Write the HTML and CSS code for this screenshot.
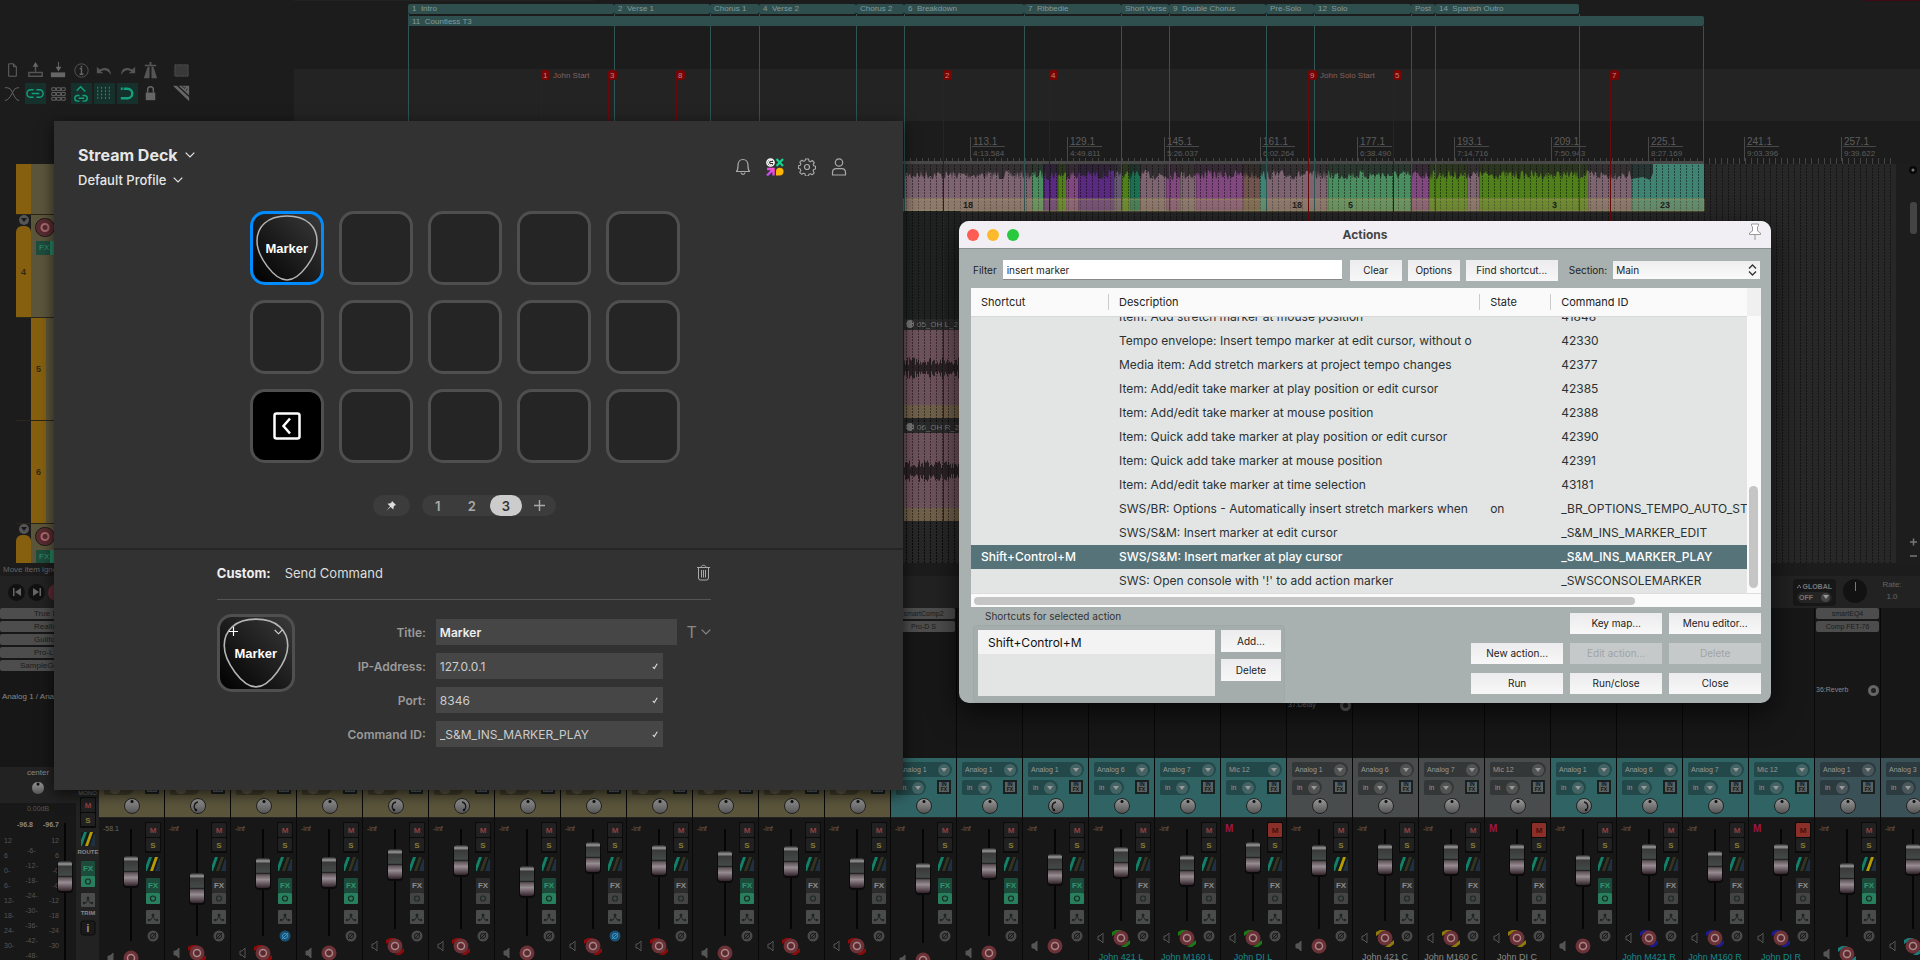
FILE: index.html
```html
<!DOCTYPE html>
<html lang="en">
<head>
<meta charset="utf-8">
<title>Stream Deck and Actions</title>
<link rel="stylesheet" href="styles.css">
</head>
<body>
<svg class="defs" width="0" height="0" aria-hidden="true">
  <defs>
    <linearGradient id="logoPink" x1="0" y1="1" x2="1" y2="0"><stop offset="0" stop-color="#b04bff"/><stop offset="1" stop-color="#ff4fd0"/></linearGradient>
    <symbol id="pick" viewBox="0 0 68 68"><path d="M34 2C54 2 64 13 64 27C64 42 47 66 34 66C21 66 4 42 4 27C4 13 14 2 34 2Z" fill="none" stroke="#b5b5b5" stroke-width="1.5"/></symbol>
    <symbol id="chev" viewBox="0 0 10 6"><path d="M.7 .7L5 5L9.3 .7" fill="none" stroke="currentColor" stroke-width="1.2"/></symbol>
    <symbol id="tick" viewBox="0 0 8 8"><path d="M1.8 4.800L3.300 6.500L6.200 1.800" fill="none" stroke="#ddd" stroke-width="1.1"/></symbol>
  </defs>
</svg>
<div class="desktop">
  <div class="daw">
    <section class="arrange">
      <div class="side">
        <div class="toolbar" id="toolbar"></div>
        <div class="tracks">
          <div class="track t-top"><i class="bar"></i><b></b></div>
          <div class="track t-four"><div class="barwrap"><u></u><i class="bar">4</i></div><b><span class="rec"></span><span class="fx">FX</span></b></div>
          <div class="track child"><i class="bar">5</i><b></b></div>
          <div class="track child"><i class="bar">6</i><b></b></div>
          <div class="track t-last"><div class="barwrap"><u></u><i class="bar"></i></div><b><span class="rec"></span><span class="fx">FX</span></b></div>
        </div>
      </div>
      <svg class="timeline" id="timeline" viewBox="294 0 1626 563" preserveAspectRatio="xMinYMin meet"></svg>
    </section>
    <section class="transport">
      <div class="status">Move item igno</div>
      <div class="transport-left">
        <button class="round" aria-label="Start"><svg width="10" height="8" viewBox="0 0 10 8"><path d="M1 0h1.500v8H1zM9 0v8L3 4z" fill="#666"/></svg></button>
        <button class="round" aria-label="End"><svg width="10" height="8" viewBox="0 0 10 8"><path d="M7.500 0H9v8H7.500zM1 0v8L7 4z" fill="#666"/></svg></button>
        <button class="round red" aria-label="Record"></button>
      </div>
      <div class="transport-right">
        <div class="global">
          <div><svg width="9" height="7" viewBox="0 0 9 7"><path d="M1 6L4.500 1.500L8 6" fill="none" stroke="#888"/><circle cx="1.500" cy="5.500" r="1.300" fill="#888"/><circle cx="4.500" cy="1.500" r="1.300" fill="#888"/><circle cx="7.500" cy="5.500" r="1.300" fill="#888"/></svg>GLOBAL</div>
          <button>OFF<u></u></button>
        </div>
        <div class="ratedial"></div>
        <div class="rate">Rate:<br>1.0</div>
      </div>
    </section>
    <section class="mixer">
      <div class="master">
        <div class="slots"><span>True Ir</span><span>RealInst</span><span>Gullfos</span><span>Pro-L</span><span>SampleGra</span></div>
        <div class="hw">Analog 1 / Analog</div>
        <div class="master-low">
          <div class="m-left">
            <span>center</span><i class="knob"></i><small>0.00dB</small>
            <div class="peaks"><b>-96.8</b><b>-96.7</b></div>
            <div class="scale">
              <div><span>12</span><span>6</span><span>0-</span><span>6-</span><span>12-</span><span>18-</span><span>24-</span><span>30-</span></div>
              <div><span>-6-</span><span>-12-</span><span>-18-</span><span>-24-</span><span>-30-</span><span>-36-</span><span>-42-</span><span>-48-</span></div>
              <div><span>12</span><span>6</span><span>-0</span><span>-6</span><span>-12</span><span>-18</span><span>-24</span><span>-30</span></div>
            </div>
            <svg class="m-fader" width="16" height="138" viewBox="0 0 16 138"><path d="M8 0v138" stroke="#050505" stroke-width="2"/><use href="#cap" y="38"/></svg>
          </div>
          <div class="m-right"><span>MONO</span><div id="masterButtons"></div></div>
        </div>
      </div>
      <div class="strips" id="strips"></div>
    </section>
  </div>

  <main class="deck">
    <header class="deck-head">
      <div class="names">
        <button class="deck-name">Stream Deck <svg width="10" height="6"><use href="#chev"/></svg></button>
        <button class="deck-profile">Default Profile <svg width="10" height="6"><use href="#chev"/></svg></button>
      </div>
      <nav class="deck-icons">
        <button aria-label="Notifications"><svg width="18" height="18" viewBox="0 0 18 18"><path d="M2.500 13.500C4 12 4 10.500 4 7.500C4 4 6 1.500 9 1.500S14 4 14 7.500C14 10.500 14 12 15.500 13.500ZM7 14.500C7.300 17 10.700 17 11 14.500" fill="none" stroke="#aaa" stroke-width="1.2" stroke-linejoin="round"/></svg></button>
        <button aria-label="Marketplace"><svg width="18" height="18" viewBox="0 0 18 18"><circle cx="4.500" cy="4.500" r="3.600" fill="none" stroke="#fff" stroke-width="1.5"/><path d="M8 4.500H4.500M6 2.500A2.300 2.300 0 1 0 6 6.500" fill="none" stroke="#fff" stroke-width="1.1"/><path d="M10.500 1l6.500 7M17 1l-6.500 7" stroke="#10d58b" stroke-width="2.2"/><path d="M1 11h6.500v6.500M7.500 11L1 17.500" fill="none" stroke="url(#logoPink)" stroke-width="2.4"/><path d="M10 17.500V13.500A3.700 3.700 0 0 1 17.500 13.500A4 4 0 0 1 13.500 17.500Z" fill="#ffb600"/></svg></button>
        <button aria-label="Settings"><svg width="18" height="18" viewBox="0 0 18 18"><path d="M7.500 1h3l.5 2 1.500.7L14.300 2.500l2 2.100-1.100 1.800.6 1.400 1.700.5v2.700l-1.800.5-.6 1.500 1.100 1.800-2 2-1.800-1.100-1.500.6-.5 1.700h-3L7 15.800l-1.500-.6-1.800 1.100-2-2L2.900 12.500 2.200 11 .5 10.500V7.800l1.800-.5.6-1.400L1.800 4.200l2-2 1.700 1.100L7 2.800Z" fill="none" stroke="#aaa" stroke-width="1.1" stroke-linejoin="round"/><circle cx="9" cy="9" r="2.500" fill="none" stroke="#aaa" stroke-width="1.2"/></svg></button>
        <button aria-label="Account"><svg width="18" height="18" viewBox="0 0 18 18"><circle cx="9" cy="4.500" r="3.700" fill="none" stroke="#aaa" stroke-width="1.2"/><path d="M2.500 17V14.500C2.500 12 4 10.700 6.500 10.700H11.500C14 10.700 15.500 12 15.500 14.500V17Z" fill="none" stroke="#aaa" stroke-width="1.2" stroke-linejoin="round"/></svg></button>
      </nav>
    </header>
    <div class="keys" id="keys"></div>
    <div class="pager">
      <button class="pin" aria-label="Pin"><svg width="12" height="12" viewBox="0 0 12 12"><path d="M7 1L11 5L9.700 5.400L8.700 6.500L8.300 9.500L5.700 6.900L1.500 10.500L5.100 6.300L2.500 3.700L5.500 3.300L6.600 2.300Z" fill="#ddd"/></svg></button>
      <div class="pages"><button>1</button><button>2</button><button class="on">3</button><button aria-label="Add page"><svg width="11" height="11" viewBox="0 0 11 11"><path d="M5.500 0v11M0 5.500h11" stroke="#aaa" stroke-width="1.4"/></svg></button></div>
    </div>
    <section class="inspector">
      <div class="insp-head"><strong>Custom:</strong><span>Send Command</span>
        <button aria-label="Delete action"><svg width="15" height="17" viewBox="0 0 15 17"><path d="M1 3.500h13M5 3.500C5 .5 10 .5 10 3.500M2.500 3.500V14Q2.500 16 4.500 16H10.500Q12.500 16 12.500 14V3.500M5.500 6v7.500M7.500 6v7.500M9.500 6v7.500" fill="none" stroke="#aaa"/></svg></button></div>
      <div class="insp-body">
        <div class="preview"><svg class="pick" viewBox="0 0 68 68"><use href="#pick"/></svg><span>Marker</span>
          <svg class="pv-plus" width="9" height="9" viewBox="0 0 9 9"><path d="M4.500 0v9M0 4.500h9" stroke="#fff" stroke-width="1.2"/></svg>
          <svg class="pv-chev" width="9" height="6"><use href="#chev"/></svg></div>
        <form class="fields">
          <label for="f1">Title:</label><div class="line"><div class="box wide"><input id="f1" value="Marker"></div><button type="button" class="tbtn" aria-label="Text style">T<svg width="10" height="6"><use href="#chev"/></svg></button></div>
          <label for="f2">IP-Address:</label><div class="box"><input id="f2" value="127.0.0.1"><svg width="8" height="8"><use href="#tick"/></svg></div>
          <label for="f3">Port:</label><div class="box"><input id="f3" value="8346"><svg width="8" height="8"><use href="#tick"/></svg></div>
          <label for="f4">Command ID:</label><div class="box"><input id="f4" value="_S&amp;M_INS_MARKER_PLAY"><svg width="8" height="8"><use href="#tick"/></svg></div>
        </form>
      </div>
    </section>
  </main>

  <section class="actions">
    <header class="titlebar"><div class="lights"><i></i><i></i><i></i></div><h1>Actions</h1>
      <svg width="16" height="18" viewBox="0 0 16 18"><path d="M4.500 1h7v1.500L10.500 4v4L13.500 10v1.500H2.500V10L5.500 8V4L4.500 2.500ZM8 11.500V17" fill="#fff" stroke="#999"/></svg></header>
    <div class="content">
      <div class="filter">
        <label for="flt">Filter</label><input id="flt" value="insert marker">
        <button class="b52">Clear</button><button class="b52">Options</button><button class="b92">Find shortcut...</button>
        <label for="sec">Section:</label>
        <div class="select"><select id="sec"><option>Main</option></select><svg width="9" height="12" viewBox="0 0 9 12"><path d="M1 4.500L4.500 1L8 4.500M1 7.500L4.500 11L8 7.500" fill="none" stroke="#333" stroke-width="1.3"/></svg></div>
      </div>
      <div class="list">
        <table>
          <colgroup><col class="c1"><col><col class="c3"><col class="c4"></colgroup>
          <thead><tr><th>Shortcut</th><th>Description</th><th>State</th><th>Command ID</th></tr></thead>
          <tbody>
            <tr class="cut"><td></td><td><div><span>Item: Add stretch marker at mouse position</span></div></td><td></td><td><div><span>41848</span></div></td></tr>
            <tr><td></td><td>Tempo envelope: Insert tempo marker at edit cursor, without o</td><td></td><td>42330</td></tr>
            <tr><td></td><td>Media item: Add stretch markers at project tempo changes</td><td></td><td>42377</td></tr>
            <tr><td></td><td>Item: Add/edit take marker at play position or edit cursor</td><td></td><td>42385</td></tr>
            <tr><td></td><td>Item: Add/edit take marker at mouse position</td><td></td><td>42388</td></tr>
            <tr><td></td><td>Item: Quick add take marker at play position or edit cursor</td><td></td><td>42390</td></tr>
            <tr><td></td><td>Item: Quick add take marker at mouse position</td><td></td><td>42391</td></tr>
            <tr><td></td><td>Item: Add/edit take marker at time selection</td><td></td><td>43181</td></tr>
            <tr><td></td><td>SWS/BR: Options - Automatically insert stretch markers when</td><td>on</td><td>_BR_OPTIONS_TEMPO_AUTO_ST</td></tr>
            <tr><td></td><td>SWS/S&amp;M: Insert marker at edit cursor</td><td></td><td>_S&amp;M_INS_MARKER_EDIT</td></tr>
            <tr class="sel"><td>Shift+Control+M</td><td>SWS/S&amp;M: Insert marker at play cursor</td><td></td><td>_S&amp;M_INS_MARKER_PLAY</td></tr>
            <tr><td></td><td>SWS: Open console with '!' to add action marker</td><td></td><td>_SWSCONSOLEMARKER</td></tr>
          </tbody>
        </table>
        <div class="vbar"><i></i></div>
        <div class="hbar"><i></i></div>
      </div>
      <div class="bottom">
        <div class="short"><h2>Shortcuts for selected action</h2>
          <div class="group"><div class="keylist"><div>Shift+Control+M</div></div><div class="keybtns"><button>Add...</button><button>Delete</button></div></div>
        </div>
        <div class="grid">
          <span></span><button>Key map...</button><button>Menu editor...</button>
          <button>New action...</button><button disabled>Edit action...</button><button disabled>Delete</button>
          <button>Run</button><button>Run/close</button><button>Close</button>
        </div>
      </div>
    </div>
  </section>
</div>
<script src="app.js"></script>
</body>
</html>
```
FILE: styles.css
```css
*{box-sizing:border-box}
body{margin:0;background:#1c1c1c;font-family:Inter,"Liberation Sans",sans-serif;color:#ddd}
button,input,select{font:inherit;color:inherit;border:0;background:none;padding:0;margin:0;border-radius:0;outline:0}
i,em{font-style:normal}
u{text-decoration:none}
.defs{position:absolute}
.desktop{position:relative;height:100vh;min-height:720px;overflow:hidden}
.daw{display:flex;flex-direction:column;height:100%;font-family:"Liberation Sans",sans-serif}
.arrange{display:grid;grid-template-columns:294px 1fr;flex:0 0 563px;overflow:hidden}
.timeline{width:100%;height:563px;display:block}
.side{background:#1c1c1c}
.toolbar{display:grid;grid-template-columns:repeat(7,22px) 40px;column-gap:1px;grid-auto-rows:23px;padding:60px 0 0 2px;height:164px;align-content:start}
.toolbar svg{width:21px;height:21px;display:block}
.toolbar svg:nth-child(8n){margin-left:8px}
.toolbar .lit{background:#16302b}
.tracks{padding-left:16px;width:120px}
.track{display:flex;height:103px;border-bottom:1px solid #2a261a}
.track .bar{width:15px;background:#86600f;font-size:9px;font-weight:700;color:#332a10;display:flex;align-items:center;justify-content:center}
.track>b{flex:1;background:#5b553b;padding:4px 5px;display:flex;flex-direction:column;gap:5px}
.t-top{height:51px}
.barwrap{display:flex;flex-direction:column;align-items:center}
.barwrap .bar{flex:1;border-radius:6px 6px 0 0}
.barwrap u{width:10px;height:10px;margin-bottom:1px;border-radius:50%;background:#555;display:flex;align-items:center;justify-content:center}
.barwrap u::after{border-top-color:#1a1a1a}
.child{padding-left:15px}
.t-last{height:40px;border:0}
.rec{width:18px;height:17px;flex:none;border-radius:9px;border:3px solid #592b31;background:radial-gradient(circle,#592b31 2px,#a66a6e 3px,#a66a6e 4px,#592b31 5px);outline:1px solid #1b1516}
.fx{width:30px;height:14px;flex:none;background:linear-gradient(90deg,#1d4d3d 14px,#2a8563 14px);color:#329471;font-size:8px;line-height:14px;padding-left:3px;font-weight:400}
.transport{flex:0 0 45px;display:grid;grid-template-columns:1fr auto;background:#222}
.status{grid-column:1/3;height:13px;font-size:8px;line-height:13px;padding-left:3px;color:#666;background:#1c1c1c}
.transport-left{display:flex;gap:3px;padding:5px 0 0 8px}
.round{width:17px;height:17px;border-radius:50%;background:#111;display:flex;align-items:center;justify-content:center}
.round.red{background:#5d2b33}
.transport-right{display:flex;gap:7px;align-items:flex-start;font-size:8px;color:#666;line-height:12px;padding-right:10px}
.global{width:43px;height:27px;background:#171717;border-radius:4px;padding:2px 4px;font-size:7px;font-weight:700;line-height:11px;color:#777}
.global div{display:flex;align-items:center;gap:1px}
.global button{display:flex;justify-content:space-between;align-items:center;width:100%;height:11px;background:#242424;border-radius:6px;padding:0 2px}
.ratedial{width:24px;height:24px;border-radius:50%;background:linear-gradient(#777,#777) 12px 3px/1px 9px no-repeat #121212}
.rate{width:36px;text-align:center}
.mixer{flex:1;display:flex;min-height:0;overflow:hidden;background:#171717}
.master{flex:0 0 99px;background:#171717}
.slots{display:grid;gap:2px;height:84px;align-content:start}
.slots span{height:11px;background:#4d4d4d;border-radius:2px;font-size:8px;line-height:11px;color:#1c1c1c;text-align:center;white-space:nowrap}
.strip .slots span{font-size:7px}
.master .slots span{text-align:left;padding-left:34px}
.master .slots span:last-child{padding-left:20px}
.hw{height:75px;font-size:8px;color:#888;white-space:nowrap;padding-left:2px}
.master-low{display:grid;grid-template-columns:76px 1fr;background:#222;height:220px;position:relative}
.m-left{display:flex;flex-direction:column;align-items:center;font-size:8px;color:#888;line-height:12px}
.m-left small{width:100%;background:#181818;text-align:center;font-size:7px;color:#555;margin-top:8px}
.knob{width:14px;height:14px;margin:0 auto;border-radius:50%;border:1px solid #222;background:radial-gradient(circle at 50% 18%,#111 1px,transparent 2px),linear-gradient(#999,#555);flex:none}
.knob svg{display:block}
.m-left .knob{margin-top:2px}
.peaks{display:flex;gap:10px;background:#181818;width:100%;justify-content:center;font-size:7px;padding:4px 0 2px}
.scale{display:grid;grid-template-columns:1fr 1fr 1fr;width:100%;background:#181818;font-size:7px;color:#555;padding:0 17px 0 4px;line-height:15px}
.scale div{display:flex;flex-direction:column}
.scale div:nth-child(2){padding-top:10px;text-align:center}
.scale div:nth-child(3){text-align:right}
.m-fader{position:absolute;left:57px;top:56px}
.m-right{display:flex;flex-direction:column;align-items:center;padding-top:22px;font-size:6px;line-height:8px;color:#777}
.strips{display:flex;flex:1;min-width:0;overflow:hidden}
.strip{flex:0 0 66px;border-right:1px solid #080808;display:flex;flex-direction:column}
.strip .slots{height:150px;padding:0 1px}
.strip .slots em{font-size:7px;color:#888;margin-top:52px;display:flex;justify-content:space-between}
.strip .slots .lower{margin-top:93px}
.slots em i{width:11px;height:11px;border-radius:50%;border:3px solid #666;background:#222;margin-top:-1px}
.top{height:60px;padding:4px 4px 0 5px;display:grid;grid-template-columns:1fr 15px;grid-template-rows:15px 15px 18px;row-gap:3px;font-size:7px;color:#999;border-bottom:1px solid #222}
.tan .top{background:#5b553b}
.teal .top{background:#306364}
.gray .top{background:#484c4c}
.blue .top{background:#3b5158}
.in1{grid-column:1/3;background:#0004;border-radius:2px 8px 8px 2px;display:flex;justify-content:space-between;align-items:center;padding:0 2px 0 3px;white-space:nowrap}
.in2{width:30px;background:#0004;border-radius:2px 8px 8px 2px;display:flex;justify-content:space-between;align-items:center;padding:0 2px 0 5px}
.in1 u,.in2 u,.global u{width:12px;height:12px;border-radius:50%;background:#ffffff26;display:flex;align-items:center;justify-content:center}
.global u{width:9px;height:9px}
u::after{content:"";border:3px solid transparent;border-top:4px solid #999;border-bottom:0}
.infx{background:#5a6262;border:2px solid #1a2020;color:#111;font-size:5px;line-height:5px;text-align:center;font-weight:700;height:14px;width:14px}
.top .knob{grid-column:1/3;width:16px;height:16px}
.top .knob.turned{background:linear-gradient(#999,#555)}
.low{height:142px;background:#171717;overflow:hidden}
.low svg,.m-right svg{display:block}

.deck{position:absolute;left:54px;top:121px;width:44.2%;background:#323232;box-shadow:0 4px 14px #000a;padding-bottom:43px;font-size:13px}
.deck-head{display:flex;justify-content:space-between;align-items:flex-start;height:90px;padding:21px 55px 0 24px}
.names{display:flex;flex-direction:column;align-items:flex-start}
.names button{display:flex;align-items:center;height:25px;gap:7px;color:#e6e6e6}
.names .deck-name{font-size:16px;font-weight:700}
.names .deck-profile{font-size:13px;font-weight:500}
.deck-icons{display:flex;gap:14px;padding-top:16px}
.deck-icons svg,.insp-head svg{display:block}
.keys{display:grid;grid-template-columns:repeat(5,74px);gap:15px;justify-content:center;padding-right:27px}
.key,.preview{width:74px;height:74px;border:3px solid #4f4f4f;border-radius:15px;background:#252525;position:relative;display:flex;align-items:center;justify-content:center}
.key.active,.preview{background:linear-gradient(45deg,#000,#3a3a3a)}
.key.active{border-color:#008cff}
.key.back{background:#000}
.pick{position:absolute;inset:0;width:100%;height:100%}
.key span,.preview span{position:relative;font:700 13px "Liberation Sans",sans-serif;color:#fff}
.pager{display:flex;justify-content:center;gap:12px;padding:32px 28px 32px 0}
.pin{width:37px;height:21px;border-radius:11px;background:#3c3c3c;display:flex;align-items:center;justify-content:center}
.pages{display:flex;background:#3c3c3c;border-radius:11px;height:21px;gap:2px}
.pages button{width:32px;border-radius:11px;color:#aaa;font-weight:600;display:flex;align-items:center;justify-content:center}
.pages .on{background:#ccc;color:#333}
.inspector{border-top:2px solid #262626;padding-right:29px}
.insp-head{width:494px;max-width:90%;margin:0 auto;height:50px;display:flex;align-items:center;padding-bottom:4px;border-bottom:1px solid #555;color:#ddd}
.insp-head strong{margin-right:14px;color:#eee;font-weight:700}
.insp-head span{font-weight:400}
.insp-head button{margin-left:auto}
.insp-body{width:494px;max-width:90%;margin:14px auto 0;display:flex}
.preview{width:78px;height:78px;flex:none}
.pv-plus{position:absolute;left:9px;top:10px}
.pv-chev{position:absolute;right:9px;top:12px}
.fields{flex:1;display:grid;grid-template-columns:131px 1fr;column-gap:10px;row-gap:8px;padding-top:5px;align-items:center}
.fields label{text-align:right;color:#9a9a9a;font-weight:600;font-size:12px}
.line{display:flex;justify-content:space-between;align-items:center}
.box{display:flex;align-items:center;width:227px;height:26px;background:#464646;padding:0 4px;font-size:12px;color:#ccc}
.box input{flex:1;min-width:0}
.box.wide{width:241px;color:#eee;font-weight:600}
.tbtn{display:flex;align-items:center;gap:4px;font-size:16px;color:#888}

.actions{position:absolute;left:calc(50% - 1px);top:221px;width:42.3%;background:#a9b1b0;border-radius:10px;overflow:hidden;color:#222;font-size:10px;box-shadow:0 10px 30px #000a}
.titlebar{display:grid;grid-template-columns:1fr auto 1fr;align-items:center;height:28px;background:#f2eff4;border-bottom:1px solid #8c9090;padding:0 8px}
.lights{display:flex;gap:8px}
.lights i{width:12px;height:12px;border-radius:50%;background:#ff5c54}
.lights i:nth-child(2){background:#fdb92c}
.lights i:nth-child(3){background:#28c83f}
.titlebar h1{margin:0;font-size:12px;font-weight:700;color:#444}
.titlebar svg{justify-self:end;margin-bottom:6px}
.content{padding:0 10px 0 12px}
.filter{display:flex;align-items:center;height:39px;gap:6px;padding:3px 1px 0 2px}
.filter input{flex:1;min-width:60px;height:20px;background:#fff;padding:0 4px;border-bottom:1px solid #888}
.actions button{height:21px;background:linear-gradient(#ececee,#f7f7f7);color:#222}
.actions button:disabled{background:#c5c9ca;color:#a0a4a5}
.b52{width:52px}
.b92{width:92px}
.filter label[for=sec]{margin-left:5px}
.filter input+.b52{margin-left:2px}
.select{width:147px;height:18px;display:flex;align-items:center;background:linear-gradient(#eee,#fafafa);padding:0 3px}
.select select{flex:1;appearance:none}
.list{display:grid;grid-template-columns:1fr 14px;background:#fafafa}
.list table{width:100%;table-layout:fixed;border-collapse:collapse;font-size:12px;background:#e2e5e4}
.c1{width:137px}
.c3{width:71px}
.c4{width:197px}
th{height:28px;padding:0 0 0 10px;background:#fafafa;text-align:left;font-weight:400;font-size:11px;color:#222;border-bottom:1px solid #d8d8d8;background-image:linear-gradient(#ccc,#ccc);background-size:1px 16px;background-repeat:no-repeat;background-position:0 6px}
th:first-child{background-image:none}
td{height:24px;padding:0 0 0 10px;white-space:nowrap;overflow:hidden;line-height:24px;color:#2c3233}
th:nth-child(n+2),td:nth-child(n+2){padding-left:11px}
.cut td{height:12px}
.cut div{height:12px;display:flex;align-items:flex-end;overflow:hidden}
.sel td{background:#56737a;color:#fff;font-weight:500}
.vbar{background:linear-gradient(#f0f0f0 28px,#fafafa 28px);padding:198px 3px 5px 2px;display:flex}
.vbar i{flex:1;background:#c5c5c5;border-radius:5px}
.hbar{grid-column:1/3;height:14px;padding:3px 0 3px 3px;border-top:1px solid #ddd}
.hbar i{display:block;width:84%;height:8px;background:#c5c5c5;border-radius:4px}
.bottom{display:flex;justify-content:space-between}
.short h2{margin:0;font-size:10px;font-weight:400;padding-left:14px;height:18px;line-height:19px;color:#333}
.group{display:flex;gap:6px;width:312px;padding:4px 3px 6px 4px;margin-left:2px;border:1px solid #a0a8a7;border-radius:4px;background:#a5adac}
.keylist{flex:1;height:66px;background:#e2e5e4;font-size:12px;color:#111}
.keylist div{height:24px;line-height:25px;background:#f3f3f3;padding-left:10px}
.keybtns{display:grid;grid-template-columns:60px;gap:7px;align-content:start}
.actions .keybtns button{height:22px}
.grid{display:grid;grid-template-columns:repeat(3,92px);column-gap:7px;row-gap:9px;padding-top:6px;align-content:start}
```
FILE: app.js
```javascript
const NS = 'font-family="Liberation Sans, sans-serif"';
let seed = 7;
const rnd = () => (seed = (seed * 16807) % 2147483647) / 2147483647;

// toolbar icons
const tools = [
  ['<path d="M7 4h5l3 3v10H7zM12 4v3h3" fill="none" stroke="#666"/>'],
  ['<path d="M4 13h14v4H4zM11 12V4" fill="none" stroke="#555" stroke-width="1.5"/><path d="M8 7l3-5 3 5z" fill="#666"/>'],
  ['<path d="M3 13h15v5H3z" fill="#666"/><path d="M11 2v8" stroke="#666"/><path d="M8 7h6l-3 5z" fill="#666"/>'],
  ['<circle cx="11" cy="11" r="7" fill="none" stroke="#555"/><path d="M11 6v2M11 9v6M9 15h4M9 9h2" stroke="#666" stroke-width="1.5"/>'],
  ['<path d="M3 7v7h7l-3-2q6-4 11 4q-1-11-12-6z" fill="#555"/>'],
  ['<path d="M19 7v7h-7l3-2q-6-4-11 4q1-11 12-6z" fill="#555"/>'],
  ['<path d="M8 7h2v12H4zM12 7h2l4 12h-6zM5 5h12v1.500H5zM10 2h2v4h-2z" fill="#555"/>'],
  ['<path d="M4 5h14v12H4z" fill="#393939" stroke="#666" stroke-dasharray="1 1"/>'],
  ['<path d="M3 5h3q3 0 5 5t5 8h2M18 5h-2q-3 0-5 5t-6 8H3" fill="none" stroke="#666"/>'],
  ['<path d="M9 7H6a4 4 0 0 0 0 8h3M12 7h3a4 4 0 0 1 0 8h-3M7 11h8" fill="none" stroke="#14a07c" stroke-width="1.5"/>', 1],
  ['<path d="M4 5h4v3H4zM9 5h4v3H9zM14 5h4v3h-4zM4 10h4v3H4zM9 10h4v3H9zM14 10h4v3h-4zM4 15h4v3H4zM9 15h4v3H9zM14 15h4v3h-4z" fill="none" stroke="#666"/>'],
  ['<path d="M6 8l4-4 5 5M9 13H7a3 3 0 0 0 0 6h2M12 13h2a3 3 0 0 1 0 6h-2M8 16h6" fill="none" stroke="#14a07c" stroke-width="1.5"/>', 1],
  ['<path d="M4 4v14M8 4v14M12 4v14M16 4v14" stroke="#14a07c" stroke-dasharray="2 1.5"/>', 1],
  ['<path d="M4 6h7a5 5 0 0 1 0 10H4" fill="none" stroke="#14a07c" stroke-width="2.5" stroke-dasharray="2 1 30"/>', 1],
  ['<path d="M6 10h10v8H6z" fill="#666"/><path d="M8 10V7q0-3 3-3t3 3v3" fill="none" stroke="#666" stroke-width="1.5"/>'],
  ['<path d="M2 3h4l13 12v4zM8 3h11v10z" fill="#666"/><path d="M12 3l1 2M15 4l-1 2M17 6l-1 2" stroke="#222"/>']
];
document.getElementById('toolbar').innerHTML = tools.map(t =>
  `<svg viewBox="0 0 22 22" class="${t[1] ? 'lit' : ''}">${t[0]}</svg>`).join('');

// timeline
const text = (x, y, s, size, fill, extra = '') => `<text x="${x}" y="${y}" font-size="${size}" fill="${fill}" ${NS} ${extra}>${s}</text>`;
const rect = (x, y, w, h, f) => `<rect x="${x}" y="${y}" width="${w}" height="${h}" fill="${f}"/>`;
let s = `<defs><pattern id="dots" width="6" height="3" patternUnits="userSpaceOnUse"><rect width="1" height="2" fill="#0007"/></pattern></defs>`;
s += rect(294, 0, 1626, 69, '#1c1c1c') + rect(294, 69, 1626, 52, '#232323') + rect(294, 121, 1626, 43, '#1c1c1c');
s += rect(294, 164, 1626, 399, '#272727') + rect(294, 164, 1602, 399, 'url(#dots)');
const regions = [[408, '1&#160; Intro'], [614, '2&#160; Verse 1'], [710, 'Chorus 1'], [759, '4&#160; Verse 2'], [856, 'Chorus 2'], [904, '6&#160; Breakdown'], [1024, '7&#160; Ribbedie'], [1121, 'Short Verse'], [1169, '9&#160; Double Chorus'], [1266, 'Pre-Solo'], [1314, '12&#160; Solo'], [1411, 'Post'], [1435, '14&#160; Spanish Outro'], [1579, '']];
s += rect(294, 161, 1410, 3, '#484848');
for (let x = 904; x < 1895; x += 6.05) s += rect(Math.round(x), 158, 1, x > 1704 ? 6 : 3, '#444');
for (let i = 0; i < 10; i++) {
  const x = Math.round(970 + i * 96.8);
  const t = ['4:13.584', '4:49.811', '5:26.037', '6:02.264', '6:38.490', '7:14.716', '7:50.943', '8:27.169', '9:03.396', '9:39.622'][i];
  s += rect(x, 137, 1, 24, '#484848') + text(x + 3, 145, (113 + 16 * i) + '.1', 10, '#5c5c5c') + rect(x + 2, 146, 33, 1, '#484848') + text(x + 3, 156, t, 8, '#5c5c5c');
}
const P = '#7d6470', V = '#80487f', G = '#4f8019', T = '#3f8373';
const clips = [[904, 1032, P], [1032, 1043, '#4a8e5f'], [1043, 1058, '#5a2a80'], [1058, 1066, G], [1066, 1078, V], [1078, 1114, '#5a2a80'], [1114, 1121, '#665875'], [1121, 1130, G], [1130, 1140, '#1a7050'], [1140, 1166, P], [1166, 1180, V], [1180, 1196, P], [1196, 1243, V], [1243, 1259, '#70544d'], [1259, 1266, T], [1266, 1328, P], [1328, 1411, '#4a8e5f'], [1411, 1429, V], [1429, 1467, G], [1467, 1479, P], [1479, 1588, G], [1588, 1631, P], [1631, 1704, T]];
for (const [a, b, c] of clips) {
  s += rect(a, 164, b - a, 47, c);
  if (b < 1704) {
    let d = `M${a} 164`;
    for (let x = a; x <= b; x++) d += `L${x} ${Math.round(170 + rnd() * 10)}`;
    s += `<path d="${d}L${b} 164Z" fill="#222c" />`;
  } else s += `<path d="M1631 164H1653V173L1650 180L1643 177L1631 179Z" fill="#222c"/>`;
  s += rect(a, 164, 1, 47, '#0003');
}
s += '<rect x="904" y="164" width="800" height="47" fill="url(#dots)"/>';
s += '<rect x="903" y="199" width="801" height="12" fill="#b0a56a55" stroke="#a69a5f99"/>';
for (const [x, n] of [[963, 18], [1292, 18], [1348, 5], [1552, 3], [1660, 23]]) s += text(x, 208, n, 9, '#222', 'font-weight="700"');
// items on the overhead tracks
s += rect(904, 211, 56, 108, '#202222');
for (const [y, n] of [[319, '05_OH L_2'], [422, '06_OH R_2']]) {
  s += rect(904, y, 56, 11, '#2b2b2b') + `<circle cx="910" cy="${y + 5}" r="4" fill="#777"/>` + text(917, y + 8, n, 8, '#777');
  s += rect(904, y + 11, 56, 76, '#6e525c') + rect(904, y + 86, 56, 13, '#716049');
  let d = '';
  for (let x = 904; x < 960; x++) { const h = 3 + rnd() * 8; d += `M${x + .5} ${y + 49 - h}V${y + 49 + h}`; }
  s += `<path d="${d}" stroke="#2b2226"/>`;
}
s += rect(904, 211, 56, 352, 'url(#dots)');
for (const [x] of regions) s += rect(x, 14, 1, x > 903 ? 197 : 107, '#2f5555');
s += rect(1703, 26, 1, 138, '#2f5555');
regions.slice(0, -1).forEach(([x, n], i) => {
  const w = regions[i + 1][0] - x;
  s += `<rect x="${x}" y="4" width="${w}" height="10" rx="2" fill="#2f4f4f"/><svg x="${x}" y="4" width="${w}" height="10">${text(4, 7, n, 8, '#849a9a')}</svg>`;
});
s += '<rect x="408" y="16" width="1296" height="10" rx="2" fill="#2f4f4f"/>' + text(412, 24, '11&#160; Countless T3', 8, '#849a9a');
for (const [x, n, l] of [[541, 1, 'John Start'], [608, 3], [676, 8], [943, 2], [1049, 4], [1308, 9, 'John Solo Start'], [1393, 5], [1610, 7]]) {
  s += rect(x, 78, 1, x > 903 ? 143 : 44, '#690808') + `<rect x="${x}" y="70" width="9" height="10" rx="3" fill="#780404"/>` + text(x + 2, 78, n, 8, '#b88');
  if (l) s += text(x + 12, 78, l, 8, '#85625f');
}
s += rect(943, 220, 1, 343, '#501414');
s += rect(1896, 164, 24, 399, '#1d1d1d') + '<circle cx="1913" cy="170" r="4" fill="#080808"/><circle cx="1913" cy="170" r="1.5" fill="#777"/><rect x="1910" y="202" width="7" height="32" rx="3" fill="#444"/>';
s += '<path d="M1910 542h7M1913.500 538.500v7M1910 556h7" stroke="#777" stroke-width="1.5"/>';
s += rect(1863, 0, 57, 1, '#400813') + rect(294, 0, 300, 1, '#222');
document.getElementById('timeline').innerHTML = s;

// mixer
const cap = `<linearGradient id="cg" x2="0" y2="1"><stop offset="0" stop-color="#222"/><stop offset=".1" stop-color="#999"/><stop offset=".18" stop-color="#3a3a3a"/><stop offset=".48" stop-color="#434a48"/><stop offset=".5" stop-color="#111"/><stop offset=".56" stop-color="#5d5458"/><stop offset=".72" stop-color="#978c91"/><stop offset="1" stop-color="#32232a"/></linearGradient>
<symbol id="cap" viewBox="0 0 16 32" width="16" height="32"><rect x="0" y="1" width="16" height="31" rx="4" fill="#0a0a0a"/><rect x="1" y="0" width="14" height="30" rx="3" fill="url(#cg)"/></symbol>`;
document.querySelector('.defs defs').insertAdjacentHTML('beforeend', cap);
const column = (x, y, o) => {
  const b = (yy, h, f) => `<rect x="${x}" y="${yy}" width="14" height="${h}" rx="1" fill="${f}"/>`;
  const L = (yy, t, f) => `<text x="${x + 7}" y="${yy}" text-anchor="middle" font-size="8" font-weight="700" fill="${f}" ${NS}>${t}</text>`;
  let r = `<rect x="${x - 1}" y="${y - 1}" width="16" height="31" rx="1" fill="#0b0b0b"/>` + b(y, 14, o.mute ? '#8a3028' : '#212121') + L(y + 10, 'M', o.mute ? '#411' : '#8f4040') + b(y + 15, 13, '#212121') + L(y + 25, 'S', '#857a35');
  const ry = y + 34;
  r += b(ry, 14, '#101a1a') + `<path d="M${x} ${ry + 14}v-6l3-8h3l-5 14z" fill="#158066"/><path d="M${x + 4} ${ry + 14}l5-14h3l-5 14z" fill="${o.send ? '#b89b00' : '#38331e'}"/><path d="M${x + 9} ${ry + 14}l4-12h1v12z" fill="#203040"/>`;
  const fy = y + 55 + (o.shift || 0), dark = '#222524';
  r += b(fy, 15, o.fx ? '#1c4b3b' : '#2c2c2c') + L(fy + 10, 'FX', o.fx ? '#329471' : '#8c8c8c') + b(fy + 15, 11, o.fx ? '#287f5e' : '#444') + `<circle cx="${x + 7}" cy="${fy + 20.5}" r="2.5" fill="none" stroke="#1c2a25" stroke-width="1.2"/>`;
  r += b(fy + 32, 14, '#4a4c4c') + `<path d="M${x + 3} ${fy + 42}h2l2-4 2 4h2" fill="none" stroke="${dark}"/><circle cx="${x + 3}" cy="${fy + 42}" r="1.3" fill="${dark}"/><circle cx="${x + 7}" cy="${fy + 37}" r="1.5" fill="${dark}"/><circle cx="${x + 11}" cy="${fy + 42}" r="1.3" fill="${dark}"/>`;
  return r;
};
const tops = [38, 55, 40, 39, 31, 27, 48, 24, 27, 33, 28, 40, 45, 30, 36, 29, 37, 24, 27, 26, 26, 26, 37, 26, 33, 26, 45, 26];
const recs = [140, 135, 135, 135, 128, 128, 135, 128, 128, 135, 128, 128, 142, 135, 128, 120, 120, 120, 128, 120, 120, 120, 128, 120, 120, 120, 136, 128];
const arcs = '.rr.rr.rr.rr...ggg.yyy.bbbtt';
const hue = { r: '#8c0b0b', g: '#1c7a14', y: '#8d7c0a', b: '#1c1c8c', t: '#1b7e7e' };
const green = [0, 2, 3, 6, 9, 12, 13, 14, 22, 26], filled = [0, 1, 3, 6, 9, 12, 13, 14, 18, 22, 26];
const pan = { 1: 'L', 4: 'L', 5: 'R', 14: 'L', 22: 'R' };
const names = { 15: 'John 421 L', 16: 'John M160 L', 17: 'John DI L', 19: 'John 421 C', 20: 'John M160 C', 21: 'John DI C', 23: 'John M421 R', 24: 'John M160 R', 25: 'John DI R' };
const ins = ['Analog 1', 'Analog 1', 'Analog 1', 'Analog 6', 'Analog 7', 'Mic 12', 'Analog 1', 'Analog 6', 'Analog 7', 'Mic 12', 'Analog 1', 'Analog 6', 'Analog 7', 'Mic 12', 'Analog 1', 'Analog 3'];
const slots = { 12: '<span>smartComp2</span><span>Pro-D S</span>', 18: '<em class="lower">37:Delay <i></i></em>', 26: '<span>smartEQ4</span><span>Comp FET-76</span><em>36:Reverb <i></i></em>' };
const knob = k => pan[k]
  ? `<i class="knob turned"><svg width="14" height="14" viewBox="0 0 14 14"><path d="${pan[k] === 'L' ? 'M7 3A4.500 4.500 0 0 0 5 11' : 'M7 3A4.500 4.500 0 0 1 9 11'}" fill="none" stroke="#1a1a1a" stroke-width="1.3"/><circle cx="${pan[k] === 'L' ? 5 : 9}" cy="11" r="1.2" fill="#111"/></svg></i>`
  : '<i class="knob"></i>';
document.getElementById('strips').innerHTML = tops.map((top, k) => {
  const cls = k < 12 ? 'tan' : k < 18 ? 'teal' : k < 22 ? 'gray' : k < 26 ? 'teal' : 'blue';
  const ry = recs[k], mute = [17, 21, 25].includes(k), a = hue[arcs[k]], blue = k === 2 || k === 7;
  let v = mute ? `<text x="4" y="14" font-size="10" font-weight="700" fill="#a01545" ${NS}>M</text>` : `<text x="4" y="13" font-size="7" fill="#666" ${NS}>${k ? '-inf' : '-58.1'}</text>`;
  v += `<path d="M32 11V${ry - 17}" stroke="#050505" stroke-width="2"/><use href="#cap" x="24" y="${top}"/>` + column(47, 5, { mute, fx: green.includes(k), send: [0, 18, 26].includes(k) });
  v += `<circle cx="54" cy="118" r="5.5" fill="${blue ? '#1c4f70' : '#484a4a'}"/><circle cx="54" cy="118" r="2.5" fill="none" stroke="${blue ? '#3a9ad0' : '#151515'}"/><path d="M51 121l6-6" stroke="${blue ? '#3a9ad0' : '#151515'}"/>`;
  if (a) v += `<path d="M23 ${ry - 2}v-4l4-2h6zM41 ${ry + 2}v4l-4 3h-5z" fill="${a}"/>`;
  v += `<circle cx="32" cy="${ry}" r="7.5" fill="#6c3238"/><circle cx="32" cy="${ry}" r="3.5" fill="#5a2a30" stroke="#a88" stroke-width="1.5"/>`;
  v += `<path d="M9 ${ry - 2}h2l3-3v10l-3-3h-2z" fill="${filled.includes(k) ? '#555' : 'none'}" stroke="#555"/>`;
  if (names[k]) v += `<text x="32" y="142" text-anchor="middle" font-size="9" fill="${cls === 'teal' ? '#16888a' : '#888'}" ${NS}>${names[k]}</text>`;
  return `<div class="strip ${cls}"><div class="slots">${slots[k] || ''}</div><div class="top"><div class="in1">${ins[k - 12] || ''}<u></u></div><div class="in2">${k < 12 ? '' : 'in'}<u></u></div><div class="infx">IN<br>FX</div>${knob(k)}</div><div class="low"><svg width="65" height="142" viewBox="0 0 65 142">${v}</svg></div></div>`;
}).join('');
document.getElementById('masterButtons').innerHTML = `<svg width="22" height="150" viewBox="0 0 22 150">${column(4, 1, { fx: 1, send: 1, shift: 8 })}<text x="11" y="57" text-anchor="middle" font-size="6" font-weight="700" fill="#888" ${NS}>ROUTE</text><text x="11" y="118" text-anchor="middle" font-size="6" font-weight="700" fill="#888" ${NS}>TRIM</text><rect x="4" y="124" width="14" height="14" rx="2" fill="#1a1a1a" stroke="#0b0b0b"/><text x="11" y="135" text-anchor="middle" font-size="10" font-weight="700" fill="#999" ${NS}>i</text></svg>`;

// deck keys
document.getElementById('keys').innerHTML = Array.from({ length: 15 }, (_, i) => {
  if (i === 0) return '<button class="key active"><svg class="pick" viewBox="0 0 68 68"><use href="#pick"/></svg><span>Marker</span></button>';
  if (i === 10) return '<button class="key back" aria-label="Back"><svg width="28" height="28" viewBox="0 0 28 28"><rect x="1.500" y="1.500" width="25" height="25" rx="2" fill="none" stroke="#fff" stroke-width="2.5"/><path d="M17 6.500L10.500 14L17 21.500" fill="none" stroke="#fff" stroke-width="2.5"/></svg></button>';
  return `<button class="key" aria-label="Key ${i + 1}"></button>`;
}).join('');
```
